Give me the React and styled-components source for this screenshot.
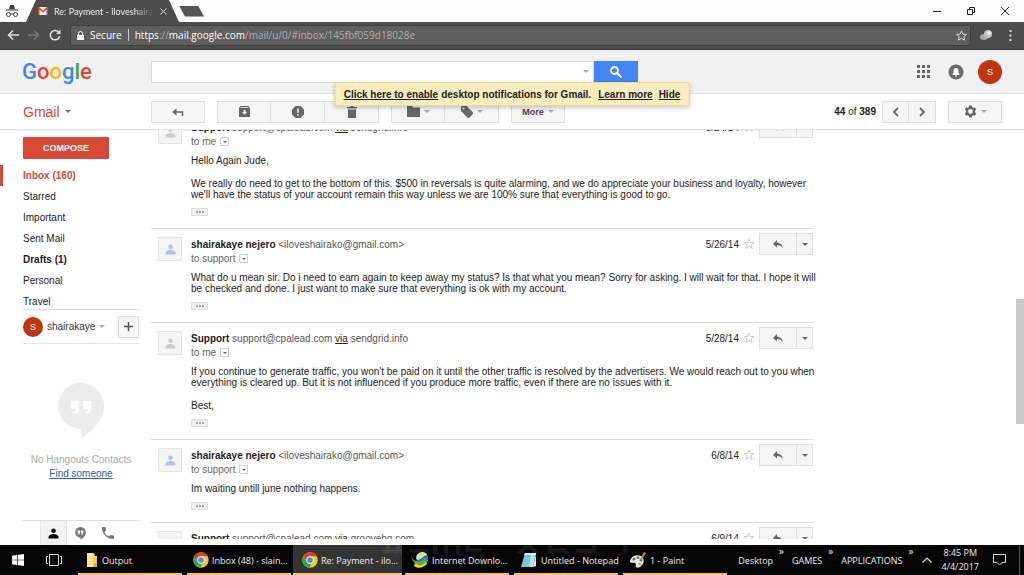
import React, { useEffect, useRef } from "react";
import styled, { createGlobalStyle, css } from "styled-components";

const messages = [
  {
    id: 1,
    name: "Support",
    address: "support@cpalead.com",
    via: "sendgrid.info",
    to: "me",
    date: "5/24/14",
    body: [
      ["Hello Again Jude,"],
      [
        "We really do need to get to the bottom of this. $500 in reversals is quite alarming, and we do appreciate your business and loyalty, however",
        "we'll have the status of your account remain this way unless we are 100% sure that everything is good to go.",
      ],
    ],
  },
  {
    id: 2,
    name: "shairakaye nejero",
    address: "<iloveshairako@gmail.com>",
    to: "support",
    date: "5/26/14",
    mine: true,
    body: [
      [
        "What do u mean sir. Do i need to earn again to keep away my status? Is that what you mean? Sorry for asking. I will wait for that. I hope it will",
        "be checked and done. I just want to make sure that everything is ok with my account.",
      ],
    ],
  },
  {
    id: 3,
    name: "Support",
    address: "support@cpalead.com",
    via: "sendgrid.info",
    to: "me",
    date: "5/28/14",
    body: [
      [
        "If you continue to generate traffic, you won't be paid on it until the other traffic is resolved by the advertisers. We would reach out to you when",
        "everything is cleared up. But it is not influenced if you produce more traffic, even if there are no issues with it.",
      ],
      ["Best,"],
    ],
  },
  {
    id: 4,
    name: "shairakaye nejero",
    address: "<iloveshairako@gmail.com>",
    to: "support",
    date: "6/8/14",
    mine: true,
    body: [["Im waiting untill june nothing happens."]],
  },
  {
    id: 5,
    name: "Support",
    address: "support@cpalead.com",
    via: "groovehq.com",
    to: "me",
    date: "6/9/14",
    body: [["Hello,"]],
  },
];

const folders = [
  { label: "Inbox (160)", current: true },
  { label: "Starred" },
  { label: "Important" },
  { label: "Sent Mail" },
  { label: "Drafts (1)", bold: true },
  { label: "Personal" },
  { label: "Travel" },
];

const PersonIcon = () => (
  <svg width="11" height="11" viewBox="0 0 22 22" fill="currentColor">
    <circle cx="11" cy="5.500" r="4.500" />
    <path d="M1 21v-3c0-4 6-6 10-6s10 2 10 6v3z" />
  </svg>
);

const ReplyIcon = () => (
  <svg width="12" height="12" viewBox="0 0 24 24" fill="currentColor">
    <path d="M10 9V4l-8 8 8 7v-5c5 0 9 2 12 6-1-6-5-10-12-11z" />
  </svg>
);

const ChromeIcon = () => (
  <svg width="16" height="16" viewBox="0 0 48 48">
    <circle cx="24" cy="24" r="23" fill="#fbc916" />
    <path d="M4 12.5A23 23 0 0 1 44 13H24a11 11 0 0 0-10 15.500z" fill="#e33b2e" />
    <path d="M4 12.500 14.500 29.500a11 11 0 0 0 14 5L22 47A23 23 0 0 1 4 12.500z" fill="#2da94f" />
    <circle cx="24" cy="24" r="11" fill="#f5f5f5" />
    <circle cx="24" cy="24" r="8.500" fill="#4a8af4" />
  </svg>
);

const FolderTaskIcon = () => (
  <svg width="12" height="16" viewBox="0 0 12 16">
    <path d="M1 1h7l1 3h2v11H1z" fill="#f3cf63" />
    <path d="M1 1h6v14H1z" fill="#fde08a" />
    <path d="M9 11h2v4H7z" fill="#d8a93c" />
  </svg>
);

const DownloadManagerIcon = () => (
  <svg width="18" height="16" viewBox="0 0 18 16">
    <circle cx="11" cy="6" r="6" fill="#2f6fd0" />
    <path d="M6 3c3-4 9-3 10 0-3 0-5 4-9 5-2-1-2-3-1-5z" fill="#bfe0f7" />
    <path d="M8 2c2-2 5-2 6-1-2 2-2 5-5 5-2 0-2-2-1-4z" fill="#f3e13a" />
    <path d="M0 4c2 5 7 7 13 4l-1-2 5 2-2 5-1-2C8 15 2 12 0 4z" fill="#4fb336" />
    <path d="M4 11c4 3 8 2 11-1l1 2c-4 4-9 5-13 2z" fill="#f3d321" />
  </svg>
);

const NotepadIcon = () => (
  <svg width="18" height="16" viewBox="0 0 18 16">
    <path d="M5 1h11l-3 14H1z" fill="#7cc4d8" />
    <path d="M5 1h11v2H4z" fill="#d5eef5" />
    <path d="M11 3h4l-2 12H9z" fill="#b7e1ec" />
    <path d="m13 15 3-13v12z" fill="#e8e8e8" />
  </svg>
);

const PaintIcon = () => (
  <svg width="18" height="16" viewBox="0 0 18 16">
    <path d="M1 9c1-5 7-7 11-5 3 2 4 6 1 9-2 3-5 3-6 2s1-3-1-4-5 1-5-2z" fill="#dfe9f0" />
    <circle cx="5" cy="7" r="1.500" fill="#d5432d" />
    <circle cx="9" cy="5.500" r="1.500" fill="#3a9f4b" />
    <circle cx="12" cy="8" r="1.500" fill="#2f6fd0" />
    <circle cx="10.500" cy="12" r="1.500" fill="#e9b421" />
    <path d="M11 8 15 0l2 1-5 8z" fill="#c98a3e" />
  </svg>
);

const tasks = [
  { label: "Output", icon: <FolderTaskIcon /> },
  { label: "Inbox (48) - slain...", icon: <ChromeIcon /> },
  { label: "Re: Payment - ilo...", icon: <ChromeIcon />, active: true },
  { label: "Internet Downlo...", icon: <DownloadManagerIcon /> },
  { label: "Untitled - Notepad", icon: <NotepadIcon /> },
  { label: "1 - Paint", icon: <PaintIcon /> },
];

const Browser = () => (
  <>
    <TabStrip>
      <Incognito>
        <svg width="14" height="14" viewBox="0 0 14 14" fill="none" stroke="#444">
          <path d="M4 5 5 1h4l1 4z" fill="#444" stroke="none" />
          <path d="M1 6h12" strokeWidth="1.200" />
          <circle cx="3.500" cy="10.500" r="2" />
          <circle cx="10.500" cy="10.500" r="2" />
          <path d="M5.500 10h3" />
        </svg>
      </Incognito>
      <Tab>
        <svg width="10" height="8" viewBox="0 0 20 16">
          <path d="M0 0h20v16H0z" fill="#f4f0ee" />
          <path d="M0 16V0h2l8 7 8-7h2v16h-3V5l-7 6-7-6v11z" fill="#d9402f" />
        </svg>
        <TabTitle>Re: Payment - iloveshaira</TabTitle>
        <TabClose aria-label="Close tab">
          <svg width="7" height="7" viewBox="0 0 7 7" stroke="#ddd">
            <path d="m.5.5 6 6m0-6-6 6" />
          </svg>
        </TabClose>
      </Tab>
      <NewTab aria-label="New tab" />
      <WindowButtons>
        <WindowButton aria-label="Minimize">
          <svg width="8" height="8" viewBox="0 0 8 8" stroke="#222">
            <path d="M0 4.500h8" />
          </svg>
        </WindowButton>
        <WindowButton aria-label="Restore">
          <svg width="8" height="8" viewBox="0 0 8 8" stroke="#222" fill="none">
            <path d="M.5 2.500h5v5h-5zM2.500 2V.5h5v5H6" />
          </svg>
        </WindowButton>
        <WindowButton aria-label="Close">
          <svg width="8" height="8" viewBox="0 0 8 8" stroke="#222">
            <path d="m0 0 8 8m0-8L0 8" />
          </svg>
        </WindowButton>
      </WindowButtons>
    </TabStrip>
    <AddressBar>
      <NavButton aria-label="Back">
        <svg width="12" height="10" viewBox="0 0 12 10" stroke="#e0e0e0" strokeWidth="1.500" fill="none">
          <path d="M12 5H1.500M6 .5 1.500 5 6 9.500" />
        </svg>
      </NavButton>
      <NavButton aria-label="Forward">
        <svg width="12" height="10" viewBox="0 0 12 10" stroke="#777" strokeWidth="1.500" fill="none">
          <path d="M0 5h10.500M6 .5 10.500 5 6 9.500" />
        </svg>
      </NavButton>
      <NavButton aria-label="Reload">
        <svg width="12" height="12" viewBox="0 0 12 12" fill="none">
          <path d="M10 3.500A4.700 4.700 0 1 0 10.700 7" stroke="#e0e0e0" strokeWidth="1.500" />
          <path d="M11.500.5V5H7z" fill="#e0e0e0" />
        </svg>
      </NavButton>
      <Omnibox>
        <svg width="7" height="9" viewBox="0 0 7 9">
          <path d="M0 4h7v5H0z" fill="#fff" />
          <path d="M1.500 4V2.500a2 2 0 0 1 4 0V4" stroke="#fff" fill="none" />
        </svg>
        <Secure>Secure</Secure>
        <Url>
          https<i>://</i>mail.google.com<i>/mail/u/0/#inbox/145fbf059d18028e</i>
        </Url>
        <svg width="11" height="11" viewBox="0 0 24 24" fill="none" stroke="#e0e0e0" strokeWidth="2">
          <path d="m12 2 3 7 8 .7-6 5 2 7.500-7-4-7 4 2-7.500-6-5L9 9z" />
        </svg>
      </Omnibox>
      <Extensions>
        <NavButton aria-label="Extension">
          <svg width="12" height="10" viewBox="0 0 12 10">
            <ellipse cx="4" cy="7" rx="4" ry="3" fill="#aaa" />
            <circle cx="8" cy="4" r="4" fill="#c4c4c4" />
            <circle cx="9" cy="3" r="2" fill="#eee" />
          </svg>
        </NavButton>
        <NavButton aria-label="Menu">
          <svg width="3" height="11" viewBox="0 0 3 11" fill="#ddd">
            <path d="M.5 0h2v2h-2zM.5 4.500h2v2h-2zM.5 9h2v2h-2z" />
          </svg>
        </NavButton>
      </Extensions>
    </AddressBar>
  </>
);

const Header = () => (
  <HeaderBar>
    <Logo href="#" aria-label="Google">
      <span>G</span>
      <span>o</span>
      <span>o</span>
      <span>g</span>
      <span>l</span>
      <span>e</span>
    </Logo>
    <Search>
      <SearchField>
        <SearchInput aria-label="Search mail" />
        <Caret $muted />
      </SearchField>
      <SearchButton aria-label="Search">
        <svg width="12" height="12" viewBox="0 0 12 12" fill="none" stroke="#fff">
          <circle cx="4.500" cy="4.500" r="3.500" strokeWidth="1.800" />
          <path d="m7 7 4.500 4.500" strokeWidth="2" />
        </svg>
      </SearchButton>
    </Search>
    <HeaderActions>
      <PlainButton aria-label="Apps">
        <svg width="13" height="13" viewBox="0 0 13 13" fill="#666">
          <path d="M0 0h3v3H0zM5 0h3v3H5zM10 0h3v3h-3zM0 5h3v3H0zM5 5h3v3H5zM10 5h3v3h-3zM0 10h3v3H0zM5 10h3v3H5zM10 10h3v3h-3z" />
        </svg>
      </PlainButton>
      <PlainButton aria-label="Notifications">
        <svg width="16" height="16" viewBox="0 0 16 16">
          <circle cx="8" cy="8" r="7.500" fill="#6b6b6b" />
          <path d="M4.500 11V10l1-1V7c0-2 1-3 2.500-3s2.500 1 2.500 3v2l1 1v1zM7 11.500h2v1H7z" fill="#fff" />
        </svg>
      </PlainButton>
      <Badge $size={24}>S</Badge>
    </HeaderActions>
  </HeaderBar>
);

const ActionBar = () => (
  <Actions>
    <GmailMenu>
      Gmail <Caret />
    </GmailMenu>
    <ButtonGroup>
      <ToolButton aria-label="Back to Inbox">
        <svg width="12" height="10" viewBox="0 0 12 10" fill="none" stroke="#666">
          <path d="M2 5h8.500v4" strokeWidth="1.500" />
          <path d="M4.500 1.500v7L0 5z" fill="#666" stroke="none" />
        </svg>
      </ToolButton>
    </ButtonGroup>
    <ButtonGroup>
      <ToolButton aria-label="Archive">
        <svg width="11" height="11" viewBox="0 0 11 11">
          <path d="M1.500 0h8L11 2v9H0V2z" fill="#666" />
          <path d="M1.500 2h8v-.7h-8zM4.500 4h2v2H8L5.500 8.800 3 6h1.500z" fill="#f5f5f5" />
        </svg>
      </ToolButton>
      <ToolButton aria-label="Report spam">
        <svg width="12" height="12" viewBox="0 0 12 12">
          <path d="M3.500 0h5L12 3.500v5L8.500 12h-5L0 8.500v-5z" fill="#666" />
          <path d="M5.200 2.500h1.600v4.200H5.200zM5.200 8h1.600v1.600H5.200z" fill="#f5f5f5" />
        </svg>
      </ToolButton>
      <ToolButton aria-label="Delete">
        <svg width="10" height="12" viewBox="0 0 10 12" fill="#666">
          <path d="M0 1h3l1-1h2l1 1h3v1.500H0zM1 3.500h8V12H1z" />
        </svg>
      </ToolButton>
    </ButtonGroup>
    <ButtonGroup>
      <ToolButton aria-label="Move to">
        <svg width="13" height="11" viewBox="0 0 13 11" fill="#666">
          <path d="M0 0h5l1.500 1.500H13V11H0z" />
        </svg>
        <Caret $muted />
      </ToolButton>
      <ToolButton aria-label="Labels">
        <svg width="12" height="12" viewBox="0 0 12 12">
          <path d="M0 1 1 0h4.500L12 6.500v1.300L8 12H7L0 5z" fill="#666" />
          <circle cx="2.500" cy="2.500" r="1" fill="#f5f5f5" />
        </svg>
        <Caret $muted />
      </ToolButton>
    </ButtonGroup>
    <ButtonGroup>
      <ToolButton>
        More <Caret $muted />
      </ToolButton>
    </ButtonGroup>
    <Pager>
      <PageCount>
        <b>44</b> of <b>389</b>
      </PageCount>
      <ButtonGroup>
        <ToolButton $narrow aria-label="Newer">
          <svg width="6" height="10" viewBox="0 0 6 10" fill="none" stroke="#666" strokeWidth="1.800">
            <path d="M5 1 1 5l4 4" />
          </svg>
        </ToolButton>
        <ToolButton $narrow aria-label="Older">
          <svg width="6" height="10" viewBox="0 0 6 10" fill="none" stroke="#666" strokeWidth="1.800">
            <path d="m1 1 4 4-4 4" />
          </svg>
        </ToolButton>
      </ButtonGroup>
      <ButtonGroup>
        <ToolButton aria-label="Settings">
          <svg width="13" height="13" viewBox="0 0 24 24" fill="#666">
            <path
              fillRule="evenodd"
              d="M9.500 1h5l.6 3 2 1.100 2.900-1 2.500 4.300L20.200 10.500v3l2.300 2.100L20 19.900l-2.900-1-2 1.100-.6 3h-5l-.6-3-2-1.100-2.900 1-2.500-4.300 2.300-2.100v-3L1.500 8.400 4 4.100l2.900 1 2-1.100zM12 7.500a4.500 4.500 0 1 0 0 9 4.500 4.500 0 1 0 0-9z"
            />
          </svg>
          <Caret $muted />
        </ToolButton>
      </ButtonGroup>
    </Pager>
  </Actions>
);

const Sidebar = () => (
  <SidebarBlock>
    <Compose>COMPOSE</Compose>
    <FolderList>
      {folders.map(({ label, current, bold }) => (
        <Folder key={label} href="#" $current={current} $bold={bold}>
          {label}
        </Folder>
      ))}
    </FolderList>
    <ChatUser>
      <Badge $size={20}>S</Badge>
      <ChatName>
        shairakaye <Caret $muted />
      </ChatName>
      <AddButton aria-label="New conversation">
        <svg width="9" height="9" viewBox="0 0 9 9" stroke="#555" strokeWidth="1.500">
          <path d="M0 4.500h9M4.500 0v9" />
        </svg>
      </AddButton>
    </ChatUser>
    <ChatEmpty>
      <svg width="46" height="56" viewBox="0 0 46 56">
        <path d="M23 0a23 23 0 0 1 23 23c0 14-12 26-23 32v-9A23 23 0 0 1 23 0z" fill="#ececec" />
        <path
          d="M13 18h8v8c0 3-2 5-5 5v-3c1 0 2-1 2-2h-5zM25 18h8v8c0 3-2 5-5 5v-3c1 0 2-1 2-2h-5z"
          fill="#fff"
        />
      </svg>
      <div>
        <p>No Hangouts Contacts</p>
        <a href="#">Find someone</a>
      </div>
    </ChatEmpty>
    <ChatTabs>
      <ChatTab $active aria-label="Contacts">
        <PersonIcon />
      </ChatTab>
      <ChatTab aria-label="Conversations">
        <svg width="11" height="13" viewBox="0 0 46 56" fill="#777">
          <path
            fillRule="evenodd"
            d="M23 0a23 23 0 0 1 23 23c0 14-12 26-23 32v-9A23 23 0 0 1 23 0zM11 15v11h5c0 2-1 3-3 3v4c5 0 8-3 8-8V15zM25 15v11h5c0 2-1 3-3 3v4c5 0 8-3 8-8V15z"
          />
        </svg>
      </ChatTab>
      <ChatTab aria-label="Phone">
        <svg width="12" height="12" viewBox="0 0 18 18" fill="#777">
          <path d="M3.600 7.800a15 15 0 0 0 6.600 6.600l2.200-2.200a1 1 0 0 1 1-.2 11 11 0 0 0 3.600.6 1 1 0 0 1 1 1V17a1 1 0 0 1-1 1A17 17 0 0 1 0 1a1 1 0 0 1 1-1h3.500a1 1 0 0 1 1 1 11 11 0 0 0 .6 3.600 1 1 0 0 1-.3 1z" />
        </svg>
      </ChatTab>
    </ChatTabs>
  </SidebarBlock>
);

const Message = ({ message }) => {
  const { name, address, via, to, date, mine, body } = message;
  return (
    <MessageBlock>
      <Avatar $mine={mine}>
        <PersonIcon />
      </Avatar>
      <MessageMain>
        <MessageHead>
          <Sender>
            <b>{name}</b> {address}
            {via && (
              <>
                {" "}
                <a href="#">via</a> {via}
              </>
            )}
          </Sender>
          <DateText>{date}</DateText>
          <StarButton aria-label="Star">
            <svg width="12" height="12" viewBox="0 0 24 24" fill="#fff" stroke="#c4c4c4" strokeWidth="1.800">
              <path d="m12 2 2.800 7H22l-6 4.700L18.500 21 12 16.500 5.500 21 8 13.700 2 9h7.200z" />
            </svg>
          </StarButton>
          <ButtonGroup>
            <ReplyButton aria-label="Reply">
              <ReplyIcon />
            </ReplyButton>
            <MoreButton aria-label="More">
              <Caret />
            </MoreButton>
          </ButtonGroup>
        </MessageHead>
        <Recipient>
          to {to}
          <DetailsButton aria-label="Show details">
            <Caret $small />
          </DetailsButton>
        </Recipient>
        <Body>
          {body.map((lines) => (
            <p key={lines[0]}>
              {lines.map((line) => (
                <span key={line}>{line}</span>
              ))}
            </p>
          ))}
        </Body>
        <TrimmedButton aria-label="Show trimmed content">
          <i />
          <i />
          <i />
        </TrimmedButton>
      </MessageMain>
    </MessageBlock>
  );
};

const Thread = () => {
  const listRef = useRef(null);

  useEffect(() => {
    listRef.current.scrollTop = 19;
  }, []);

  return (
    <ThreadBlock>
      <MessageList ref={listRef}>
        {messages.map((message) => (
          <Message key={message.id} message={message} />
        ))}
      </MessageList>
      <ScrollTrack>
        <ScrollThumb />
      </ScrollTrack>
    </ThreadBlock>
  );
};

const Taskbar = () => (
  <TaskbarBlock>
    <StartArea>
      <TaskIconButton aria-label="Start">
        <svg width="12" height="12" viewBox="0 0 12 12" fill="#fff">
          <path d="M0 1.700 5 1v4.700H0zM5.700.9 12 0v5.700H5.700zM0 6.300h5V11l-5-.7zM5.700 6.300H12V12l-6.300-.9z" />
        </svg>
      </TaskIconButton>
      <TaskIconButton aria-label="Task view">
        <svg width="16" height="12" viewBox="0 0 16 12" fill="none" stroke="#ddd">
          <path d="M3.500.5h9v11h-9zM2 2.500H.5v7H2M14 2.500h1.500v7H14" />
        </svg>
      </TaskIconButton>
    </StartArea>
    {tasks.map(({ label, icon, active }) => (
      <Task key={label} $active={active}>
        <TaskIcon>{icon}</TaskIcon>
        {label}
      </Task>
    ))}
    <Wallpaper aria-hidden="true">
      <svg width="246" height="9" viewBox="0 0 246 9" stroke="#fff" strokeOpacity="0.080" strokeWidth="4" fill="none">
        <path d="M0 6h20M7 0 4 9M17 0l-3 9M28 6h18M53 0v9M64 0v9M76 0v9M100 5H86V0M136 9l10-9 10 9M168 0v9M168 5h14l4 4M194 6h18V0M243 0v9" />
      </svg>
    </Wallpaper>
    <Tray>
      {["Desktop", "GAMES", "APPLICATIONS"].map((label) => (
        <TrayMenu key={label}>
          {label}
          <sup>»</sup>
        </TrayMenu>
      ))}
      <TrayButton aria-label="Show hidden icons">
        <svg width="10" height="6" viewBox="0 0 10 6" fill="none" stroke="#ddd" strokeWidth="1.200">
          <path d="m.5 5.500 4.500-4.500 4.500 4.500" />
        </svg>
      </TrayButton>
      <Clock>
        <span>8:45 PM</span>
        <span>4/4/2017</span>
      </Clock>
      <TrayButton aria-label="Action center">
        <svg width="13" height="12" viewBox="0 0 13 12" fill="none" stroke="#ddd">
          <path d="M.5.5h12v8H9L6.500 11 4 8.500H.5z" />
        </svg>
      </TrayButton>
      <ShowDesktop aria-label="Show desktop" />
    </Tray>
  </TaskbarBlock>
);

const App = () => {
  return (
    <Desktop>
      <GlobalStyle />
      <Browser />
      <Page>
        <Header />
        <Notice>
          <a href="#">Click here to enable</a> desktop notifications for Gmail.
          <NoticeLinks>
            <a href="#">Learn more</a>
            <a href="#">Hide</a>
          </NoticeLinks>
        </Notice>
        <ActionBar />
        <Content>
          <Sidebar />
          <Thread />
        </Content>
      </Page>
      <Taskbar />
    </Desktop>
  );
};

const GlobalStyle = createGlobalStyle`
  * {
    box-sizing: border-box;
  }

  body {
    margin: 0;
    font-family: "Liberation Sans", Arial, sans-serif;
    font-size: 10px;
    color: #222;
  }

  button {
    margin: 0;
    padding: 0;
    border: 0;
    background: none;
    font: inherit;
    color: inherit;
  }

  p {
    margin: 0;
  }

  a {
    color: inherit;
  }

  svg {
    flex: none;
    display: block;
  }
`;

const uiFont = css`
  font-family: "Open Sans", "Noto Sans", sans-serif;
  font-size: 9px;
`;

const Desktop = styled.div`
  height: 100vh;
  display: flex;
  flex-direction: column;
  overflow: hidden;
  background: #fff;
`;

const TabStrip = styled.div`
  ${uiFont}
  flex: none;
  height: 22px;
  display: flex;
  align-items: center;
  background: #fdfdfd;
`;

const Incognito = styled.div`
  width: 26px;
  padding-left: 5px;
`;

const Tab = styled.div`
  width: 153px;
  height: 22px;
  padding: 0 12px;
  display: flex;
  align-items: center;
  gap: 6px;
  color: #eee;
  background: #4c4c4c;
  clip-path: polygon(10px 0, 143px 0, 100% 100%, 0 100%);
`;

const TabTitle = styled.span`
  flex: 1;
  min-width: 0;
  overflow: hidden;
  white-space: nowrap;
  font-family: Lato, sans-serif;
  mask-image: linear-gradient(to right, #000 80%, transparent);
`;

const TabClose = styled.button`
  width: 7px;
`;

const NewTab = styled.button`
  width: 25px;
  height: 11px;
  background: #555;
  clip-path: polygon(0 0, 19px 0, 100% 100%, 6px 100%);
`;

const WindowButtons = styled.div`
  margin-left: auto;
  padding-right: 2px;
  display: flex;
`;

const WindowButton = styled.button`
  width: 34px;
  height: 20px;
  display: flex;
  align-items: center;
  justify-content: center;
`;

const AddressBar = styled.div`
  ${uiFont}
  flex: none;
  height: 28px;
  padding: 0 8px 1px 7px;
  display: flex;
  align-items: center;
  gap: 9px;
  background: #4c4c4c;
  border-bottom: 1px solid #3c3c3c;
`;

const NavButton = styled.button`
  width: 12px;
  height: 20px;
  display: flex;
  align-items: center;
  justify-content: center;
`;

const Omnibox = styled.div`
  flex: 1;
  height: 21px;
  padding: 0 3px 0 6px;
  display: flex;
  align-items: center;
  gap: 6px;
  color: #fff;
  font-size: 10px;
  background: #5e5e5e;
  border: 1px solid #404040;
  border-radius: 2px;
`;

const Secure = styled.span`
  padding-right: 6px;
  border-right: 1px solid #ccc;
  line-height: 12px;
`;

const Url = styled.span`
  flex: 1;

  i {
    font-style: normal;
    color: #b0b0b0;
  }
`;

const Extensions = styled.div`
  display: flex;
  gap: 12px;
`;

const Page = styled.div`
  position: relative;
  flex: 1;
  min-height: 0;
  display: flex;
  flex-direction: column;
`;

const HeaderBar = styled.header`
  flex: none;
  height: 44px;
  padding-right: 22px;
  display: flex;
  align-items: center;
  background: #f1f1f1;
  border-bottom: 1px solid #e5e5e5;
`;

const Logo = styled.a`
  width: 151px;
  padding-left: 22px;
  font-family: Roboto, sans-serif;
  font-size: 22px;
  line-height: 24px;
  font-weight: 500;
  text-decoration: none;
  color: #4285f4;

  span:nth-child(2),
  span:nth-child(6) {
    color: #ea4335;
  }

  span:nth-child(3) {
    color: #fbbc05;
  }

  span:nth-child(5) {
    color: #34a853;
  }
`;

const Search = styled.div`
  width: 487px;
  display: flex;
`;

const SearchField = styled.div`
  flex: 1;
  height: 22px;
  padding-right: 4px;
  display: flex;
  align-items: center;
  background: #fff;
  border: 1px solid #d9d9d9;
`;

const SearchInput = styled.input`
  flex: 1;
  min-width: 0;
  height: 20px;
  padding: 0 6px;
  border: 0;
  outline: 0;
  font: inherit;
  background: none;
`;

const SearchButton = styled.button`
  width: 44px;
  height: 22px;
  display: flex;
  align-items: center;
  justify-content: center;
  background: #4285f4;
`;

const HeaderActions = styled.div`
  margin-left: auto;
  display: flex;
  align-items: center;
  gap: 18px;
`;

const PlainButton = styled.button`
  display: flex;
`;

const Badge = styled.span`
  flex: none;
  width: ${({ $size }) => $size}px;
  height: ${({ $size }) => $size}px;
  margin-left: ${({ $size }) => ($size > 20 ? "-4px" : "0")};
  display: flex;
  align-items: center;
  justify-content: center;
  border-radius: 50%;
  font-size: 9px;
  color: #fff;
  background: #bf360c;
`;

const Notice = styled.div`
  position: absolute;
  z-index: 2;
  top: 32px;
  left: 50%;
  height: 24px;
  padding: 0 8px;
  display: flex;
  align-items: center;
  gap: 3px;
  transform: translateX(-50%);
  white-space: nowrap;
  font-weight: bold;
  background: #f9edbe;
  border: 1px solid #f0d78c;
  border-radius: 2px;
  box-shadow: 0 2px 4px rgba(0, 0, 0, 0.2);
`;

const NoticeLinks = styled.span`
  margin-left: 4px;
  display: flex;
  gap: 6px;
`;

const Caret = styled.i`
  flex: none;
  width: 0;
  height: 0;
  border: ${({ $small }) => ($small ? 2 : 3)}px solid transparent;
  border-top-color: ${({ $muted }) => ($muted ? "#aaa" : "currentColor")};
  border-bottom: 0;
`;

const Actions = styled.div`
  flex: none;
  height: 36px;
  padding-right: 22px;
  display: flex;
  align-items: center;
  gap: 12px;
  border-bottom: 1px solid #e5e5e5;
  box-shadow: 0 1px 1px #f2f2f2;
`;

const GmailMenu = styled.button`
  width: 139px;
  padding-left: 23px;
  display: flex;
  align-items: center;
  gap: 5px;
  font-size: 14px;
  color: #d14836;
`;

const ButtonGroup = styled.div`
  display: flex;
`;

const baseButton = css`
  height: 22px;
  display: flex;
  align-items: center;
  justify-content: center;
  color: #555;
  background: #f5f5f5;
  border: 1px solid #dfdfdf;

  & + & {
    border-left: 0;
  }
`;

const ToolButton = styled.button`
  ${baseButton}
  width: ${({ $narrow }) => ($narrow ? 27 : 54)}px;
  gap: 4px;
  font-size: 9px;
  font-weight: bold;
  color: #444;
`;

const Pager = styled.div`
  margin-left: auto;
  display: flex;
  align-items: center;
  gap: 12px;
`;

const PageCount = styled.span`
  margin-right: -6px;
`;

const Content = styled.div`
  flex: 1;
  min-height: 0;
  display: flex;
`;

const SidebarBlock = styled.aside`
  flex: none;
  width: 151px;
  padding: 7px 12px 0 23px;
  display: flex;
  flex-direction: column;
`;

const Compose = styled.button`
  flex: none;
  width: 86px;
  height: 22px;
  font-size: 9px;
  font-weight: bold;
  color: #fff;
  background: #d84938;
  border-radius: 1px;
`;

const FolderList = styled.nav`
  flex: none;
  margin: 6px 0 -3px -23px;
  display: flex;
  flex-direction: column;
`;

const Folder = styled.a`
  height: 21px;
  padding-left: 20px;
  border-left: 3px solid ${({ $current }) => ($current ? "#d84938" : "transparent")};
  line-height: 21px;
  text-decoration: none;
  font-weight: ${({ $current, $bold }) => ($current || $bold ? "bold" : "normal")};
  color: ${({ $current }) => ($current ? "#d14836" : "#222")};
`;

const ChatUser = styled.div`
  flex: none;
  height: 35px;
  display: flex;
  align-items: center;
  gap: 4px;
  border-top: 1px solid #ddd;
  border-bottom: 1px solid #e5e5e5;
`;

const ChatName = styled.button`
  display: flex;
  align-items: center;
  gap: 4px;
  color: #333;
`;

const AddButton = styled.button`
  ${baseButton}
  width: 21px;
  margin-left: auto;
`;

const ChatEmpty = styled.div`
  flex: 1;
  display: flex;
  flex-direction: column;
  align-items: center;
  justify-content: center;
  gap: 14px;
  text-align: center;
  white-space: nowrap;
  line-height: 14px;
  color: #aaa;

  a {
    color: #2a5db0;
  }
`;

const ChatTabs = styled.div`
  flex: none;
  height: 25px;
  padding-left: 17px;
  display: flex;
  border-top: 1px solid #ddd;
`;

const ChatTab = styled.button`
  width: 27px;
  display: flex;
  align-items: center;
  justify-content: center;
  color: #000;
  background: ${({ $active }) => ($active ? "#f3f3f3" : "none")};
  border: 1px solid ${({ $active }) => ($active ? "#e5e5e5" : "transparent")};
  border-width: 0 1px;
`;

const ThreadBlock = styled.main`
  flex: 1;
  min-width: 0;
  display: flex;
  justify-content: space-between;
`;

const MessageList = styled.div`
  width: 678px;
  margin-bottom: 6px;
  padding-right: 16px;
  overflow-y: scroll;
  scrollbar-width: none;
`;

const MessageBlock = styled.article`
  padding: 4px 0 12px 7px;
  display: flex;
  align-items: flex-start;
  gap: 9px;
  border-top: 1px solid #dcdcdc;
`;

const Avatar = styled.div`
  flex: none;
  width: 24px;
  height: 24px;
  margin-top: 4px;
  display: flex;
  align-items: center;
  justify-content: center;
  color: ${({ $mine }) => ($mine ? "#a9c3f5" : "#ccc")};
  background: #f5f5f5;
  border: 1px solid #e5e5e5;
`;

const MessageMain = styled.div`
  flex: 1;
  min-width: 0;
`;

const MessageHead = styled.div`
  display: flex;
  align-items: center;
`;

const Sender = styled.div`
  flex: 1;
  color: #555;

  b {
    color: #222;
  }

  a {
    color: #222;
  }
`;

const DateText = styled.time`
  color: #222;
`;

const StarButton = styled.button`
  padding: 0 4px;
`;

const ReplyButton = styled.button`
  ${baseButton}
  width: 38px;
  color: #666;
`;

const MoreButton = styled.button`
  ${baseButton}
  width: 16px;
  border-left: 0;
  color: #666;
`;

const Recipient = styled.div`
  height: 7px;
  display: flex;
  align-items: center;
  gap: 4px;
  color: #666;
`;

const DetailsButton = styled.button`
  width: 9px;
  height: 9px;
  display: flex;
  align-items: center;
  justify-content: center;
  border: 1px solid #ccc;
  border-radius: 1px;
`;

const Body = styled.div`
  padding: 10px 0 6px;
  display: flex;
  flex-direction: column;
  gap: 12px;
  line-height: 11px;
  white-space: nowrap;

  span {
    display: block;
  }
`;

const TrimmedButton = styled.button`
  width: 17px;
  height: 8px;
  margin-top: 2px;
  display: flex;
  align-items: center;
  justify-content: center;
  gap: 1px;
  background: #f1f1f1;
  border: 1px solid #ddd;

  i {
    width: 2px;
    height: 2px;
    background: #aaa;
  }
`;

const ScrollTrack = styled.div`
  width: 8px;
  display: flex;
  flex-direction: column;
`;

const ScrollThumb = styled.div`
  flex: 0 0 30%;
  margin-top: 169px;
  background: #c8c8c8;
`;

const TaskbarBlock = styled.footer`
  ${uiFont}
  position: relative;
  flex: none;
  height: 30px;
  display: flex;
  white-space: nowrap;
  color: #f0f0f0;
  background: #050505;
`;

const Wallpaper = styled.div`
  position: absolute;
  top: 0;
  left: 382px;
  pointer-events: none;
`;

const StartArea = styled.div`
  width: 75px;
  padding-left: 12px;
  display: flex;
  gap: 22px;
`;

const TaskIconButton = styled.button`
  display: flex;
  align-items: center;
`;

const Task = styled.button`
  position: relative;
  width: 109px;
  padding: 0 0 0 9px;
  display: flex;
  align-items: center;
  gap: 3px;
  background: ${({ $active }) => ($active ? "#333" : "none")};

  &::after {
    content: "";
    position: absolute;
    right: ${({ $active }) => ($active ? 0 : 2)}px;
    bottom: 0;
    left: ${({ $active }) => ($active ? 0 : 3)}px;
    height: 2px;
    background: #f5bc70;
  }
`;

const TaskIcon = styled.span`
  min-width: 15px;
  display: flex;
  justify-content: center;
`;

const Tray = styled.div`
  margin-left: auto;
  display: flex;
  align-items: center;
`;

const TrayMenu = styled.button`
  height: 24px;
  margin-right: 8px;
  display: flex;
  align-items: center;
  gap: 6px;

  sup {
    align-self: flex-start;
    font-size: 10px;
    line-height: 6px;
  }
`;

const TrayButton = styled.button`
  display: flex;
`;

const Clock = styled.time`
  margin: 0 14px 0 10px;
  display: flex;
  flex-direction: column;
  align-items: center;
  line-height: 14px;
`;

const ShowDesktop = styled.button`
  width: 5px;
  height: 30px;
  margin-left: 13px;
  border-left: 1px solid #555;
`;

export default App;
